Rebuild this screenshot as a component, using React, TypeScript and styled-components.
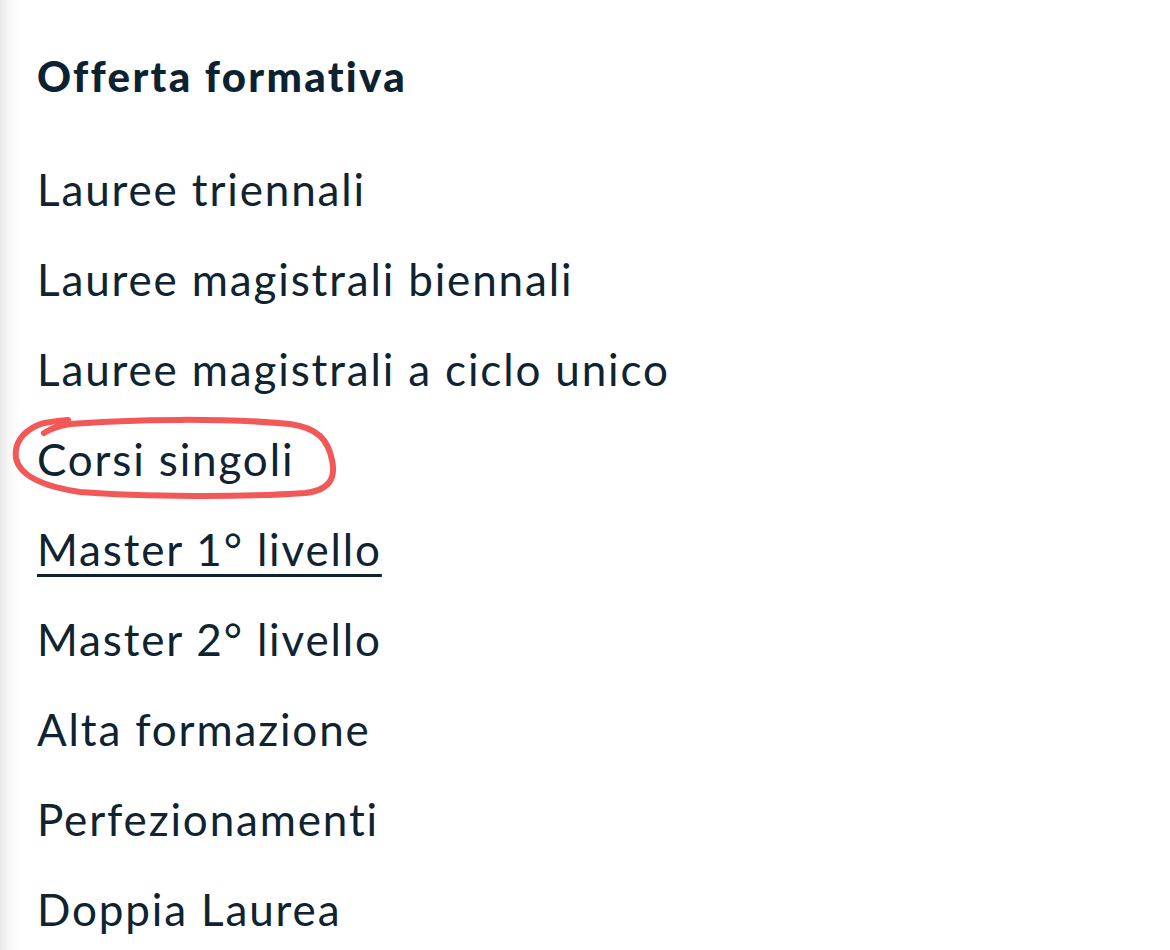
import React from "react";
import styled, { createGlobalStyle } from "styled-components";

const Global = createGlobalStyle`
  html, body { margin: 0; padding: 0; background: #ffffff; }
  body { font-family: "Lato", "Noto Sans", sans-serif; }
`;

const Page = styled.div`
  position: relative;
  width: 1170px;
  height: 950px;
  overflow: hidden;
  background: linear-gradient(to right, #e9e9e9 0px, #f6f6f6 8px, #ffffff 18px);
`;

const Menu = styled.nav`
  display: flex;
  flex-direction: column;
  padding: 44px 0 0 37px;
`;

const Title = styled.h2`
  margin: 0 0 36px 0;
  font-family: "Lato", sans-serif;
  font-weight: 900;
  font-size: 42px;
  letter-spacing: 2.3px;
  line-height: 64px;
  color: #0c2230;
`;

const List = styled.ul`
  list-style: none;
  margin: 0;
  padding: 0;
  display: flex;
  flex-direction: column;
`;

const Item = styled.li<{ $underline?: boolean }>`
  font-family: "Lato", sans-serif;
  font-size: 44px;
  letter-spacing: 1.85px;
  line-height: 90px;
  color: #0f2331;
  text-decoration: ${(p) => (p.$underline ? "underline" : "none")};
  text-decoration-thickness: 3px;
  text-underline-offset: 8px;
`;

const Marker = styled.svg`
  position: absolute;
  left: 0;
  top: 0;
  pointer-events: none;
`;

const items = [
  "Lauree triennali",
  "Lauree magistrali biennali",
  "Lauree magistrali a ciclo unico",
  "Corsi singoli",
  "Master 1° livello",
  "Master 2° livello",
  "Alta formazione",
  "Perfezionamenti",
  "Doppia Laurea",
];

export default function App() {
  return (
    <Page>
      <Global />
      <Menu>
        <Title>Offerta formativa</Title>
        <List>
          {items.map((t) => (
            <Item key={t} $underline={t === "Master 1° livello"}>
              {t}
            </Item>
          ))}
        </List>
      </Menu>
      <Marker width="1170" height="950" viewBox="0 0 1170 950">
        <path
          d="M68 420 C 55 421, 45 422, 38 425 C 22 432, 14 444, 16 458 C 19 474, 40 486, 80 492 C 140 497, 250 497, 305 493 C 330 490, 336 478, 332 460 C 328 440, 318 428, 290 424 C 230 418, 130 419, 70 424 C 58 426, 50 429, 44 433"
          fill="none"
          stroke="#f25858"
          strokeWidth="6"
          strokeLinecap="round"
          strokeLinejoin="round"
        />
      </Marker>
    </Page>
  );
}
